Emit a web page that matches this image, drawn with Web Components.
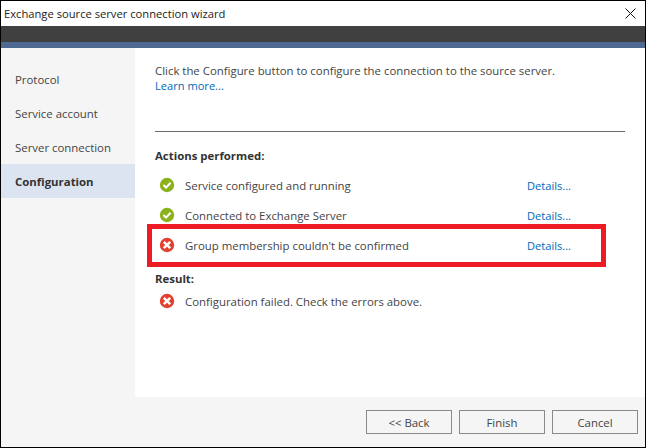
<!DOCTYPE html>
<html>
<head>
<meta charset="utf-8">
<title>Exchange source server connection wizard</title>
<style>
  html, body { margin: 0; padding: 0; background: #fff; }
  body { font: 11.4px "Open Sans", "Liberation Sans", sans-serif; color: #444; }
</style>
</head>
<body>
<wizard-window heading="Exchange source server connection wizard">
  <nav-item slot="nav">Protocol</nav-item>
  <nav-item slot="nav">Service account</nav-item>
  <nav-item slot="nav">Server connection</nav-item>
  <nav-item slot="nav" selected>Configuration</nav-item>

  <intro-text>
    Click the Configure button to configure the connection to the source server.
    <a slot="link">Learn more...</a>
  </intro-text>

  <section-label class="actions">Actions performed:</section-label>
  <status-row state="ok" details>Service configured and running</status-row>
  <status-row state="ok" details>Connected to Exchange Server</status-row>
  <status-row state="error" details>Group membership couldn't be confirmed</status-row>
  <section-label class="result">Result:</section-label>
  <status-row state="error">Configuration failed. Check the errors above.</status-row>

  <wiz-button slot="footer">&lt;&lt; Back</wiz-button>
  <wiz-button slot="footer">Finish</wiz-button>
  <wiz-button slot="footer">Cancel</wiz-button>
</wizard-window>

<script>
const FONT = '"Open Sans", "Liberation Sans", sans-serif';

class WizardWindow extends HTMLElement {
  constructor() {
    super();
    this.attachShadow({ mode: "open" });
  }

  connectedCallback() {
    this.shadowRoot.innerHTML = `
      <style>
        :host {
          display: flex;
          flex-direction: column;
          position: relative;
          box-sizing: border-box;
          width: 646px;
          height: 448px;
          border: 1px solid #000;
          background: #fff;
          overflow: hidden;
          font-family: ${FONT};
        }
        .title {
          display: flex;
          justify-content: space-between;
          align-items: center;
          height: 25px;
          padding: 0 9px 0 3px;
          font-size: 11.2px;
          color: #222;
        }
        .close { display: block; width: 11px; height: 11px; }
        .dark { height: 16px; background: #404040; }
        .blue { height: 6px; background: #4f6a92; }
        .side {
          width: 134px;
          padding-top: 14px;
          background: #f5f5f5;
        }
        .main {
          flex: 1;
          padding: 15px 20px 0 20px;
        }
        .bottom {
          display: flex;
          justify-content: flex-end;
          gap: 7px;
          height: 50px;
          padding: 13px 7px 0 0;
          box-sizing: border-box;
          background: #f5f5f5;
        }
        /* the bottom bar only starts right of the sidebar */
        .wrap { flex: 1; display: flex; min-height: 0; }
        .col { flex: 1; display: flex; flex-direction: column; min-width: 0; }
        .mark {
          position: absolute;
          left: 146px;
          top: 223px;
          width: 459px;
          height: 43px;
          box-sizing: border-box;
          border: 5px solid #ed1c24;
          pointer-events: none;
        }
      </style>
      <div class="title">
        <span>${this.getAttribute("heading")}</span>
        <svg class="close" viewBox="0 0 11 11"><path d="M.5.5l10 10M10.5.5l-10 10" stroke="#111" stroke-width="1" fill="none"/></svg>
      </div>
      <div class="dark"></div>
      <div class="blue"></div>
      <div class="wrap">
        <div class="side"><slot name="nav"></slot></div>
        <div class="col">
          <div class="main"><slot></slot></div>
          <div class="bottom"><slot name="footer"></slot></div>
        </div>
      </div>
      <div class="mark"></div>
    `;
  }
}

class NavItem extends HTMLElement {
  constructor() {
    super();
    this.attachShadow({ mode: "open" }).innerHTML = `
      <style>
        :host {
          display: flex;
          align-items: center;
          height: 34px;
          padding-left: 14px;
          font-size: 11.4px;
          color: #444;
        }
        :host([selected]) {
          background: #dce4f1;
          font-weight: 700;
          color: #333;
        }
      </style>
      <slot></slot>`;
  }
}

class IntroText extends HTMLElement {
  constructor() {
    super();
    this.attachShadow({ mode: "open" }).innerHTML = `
      <style>
        :host {
          display: block;
          height: 68px;
          border-bottom: 1px solid #6b6b6b;
          font-size: 11.4px;
          line-height: 16px;
          color: #444;
        }
        .link { display: block; color: #0067b8; font-size: 11.1px; line-height: 14px; }
      </style>
      <slot></slot>
      <span class="link"><slot name="link"></slot></span>`;
  }
}

class SectionLabel extends HTMLElement {
  constructor() {
    super();
    this.attachShadow({ mode: "open" }).innerHTML = `
      <style>
        :host {
          display: block;
          font-size: 11.4px;
          font-weight: 700;
          line-height: 16px;
          color: #333;
        }
        :host(.actions) { padding-top: 16px; padding-bottom: 6px; }
        :host(.result) { padding-top: 11px; line-height: 15px; }
      </style>
      <slot></slot>`;
  }
}

class StatusRow extends HTMLElement {
  constructor() {
    super();
    this.attachShadow({ mode: "open" });
  }

  connectedCallback() {
    const ok = this.getAttribute("state") === "ok";
    const icon = ok
      ? `<circle cx="8" cy="8" r="7.2" fill="#8cb21b"/>
         <path d="M4.4 8.1l2.6 2.5 4.6-4.9" fill="none" stroke="#fff" stroke-width="2.1"/>`
      : `<circle cx="8" cy="8" r="7.2" fill="#e3412f"/>
         <path d="M4.8 4.8l6.4 6.4M11.2 4.8l-6.4 6.4" fill="none" stroke="#fff" stroke-width="2.4"/>`;
    const details = this.hasAttribute("details") ? `<span class="details">Details...</span>` : "";
    this.shadowRoot.innerHTML = `
      <style>
        :host {
          display: flex;
          align-items: center;
          height: 30px;
          padding-left: 4px;
          font-size: 11.4px;
          color: #444;
        }
        svg { width: 16px; height: 16px; margin: -1px 10px 0 0; flex: none; }
        .text { width: 342px; }
        .details { color: #0067b8; font-size: 11.1px; }
      </style>
      <svg viewBox="0 0 16 16">${icon}</svg>
      <span class="text"><slot></slot></span>
      ${details}`;
  }
}

class WizButton extends HTMLElement {
  constructor() {
    super();
    this.attachShadow({ mode: "open" }).innerHTML = `
      <style>
        :host {
          display: flex;
          align-items: center;
          justify-content: center;
          box-sizing: border-box;
          width: 86px;
          height: 24px;
          border: 1px solid #8a8a8a;
          background: #f5f5f5;
          font-size: 11.4px;
          color: #444;
        }
      </style>
      <slot></slot>`;
  }
}

customElements.define("wizard-window", WizardWindow);
customElements.define("nav-item", NavItem);
customElements.define("intro-text", IntroText);
customElements.define("section-label", SectionLabel);
customElements.define("status-row", StatusRow);
customElements.define("wiz-button", WizButton);
</script>
</body>
</html>
